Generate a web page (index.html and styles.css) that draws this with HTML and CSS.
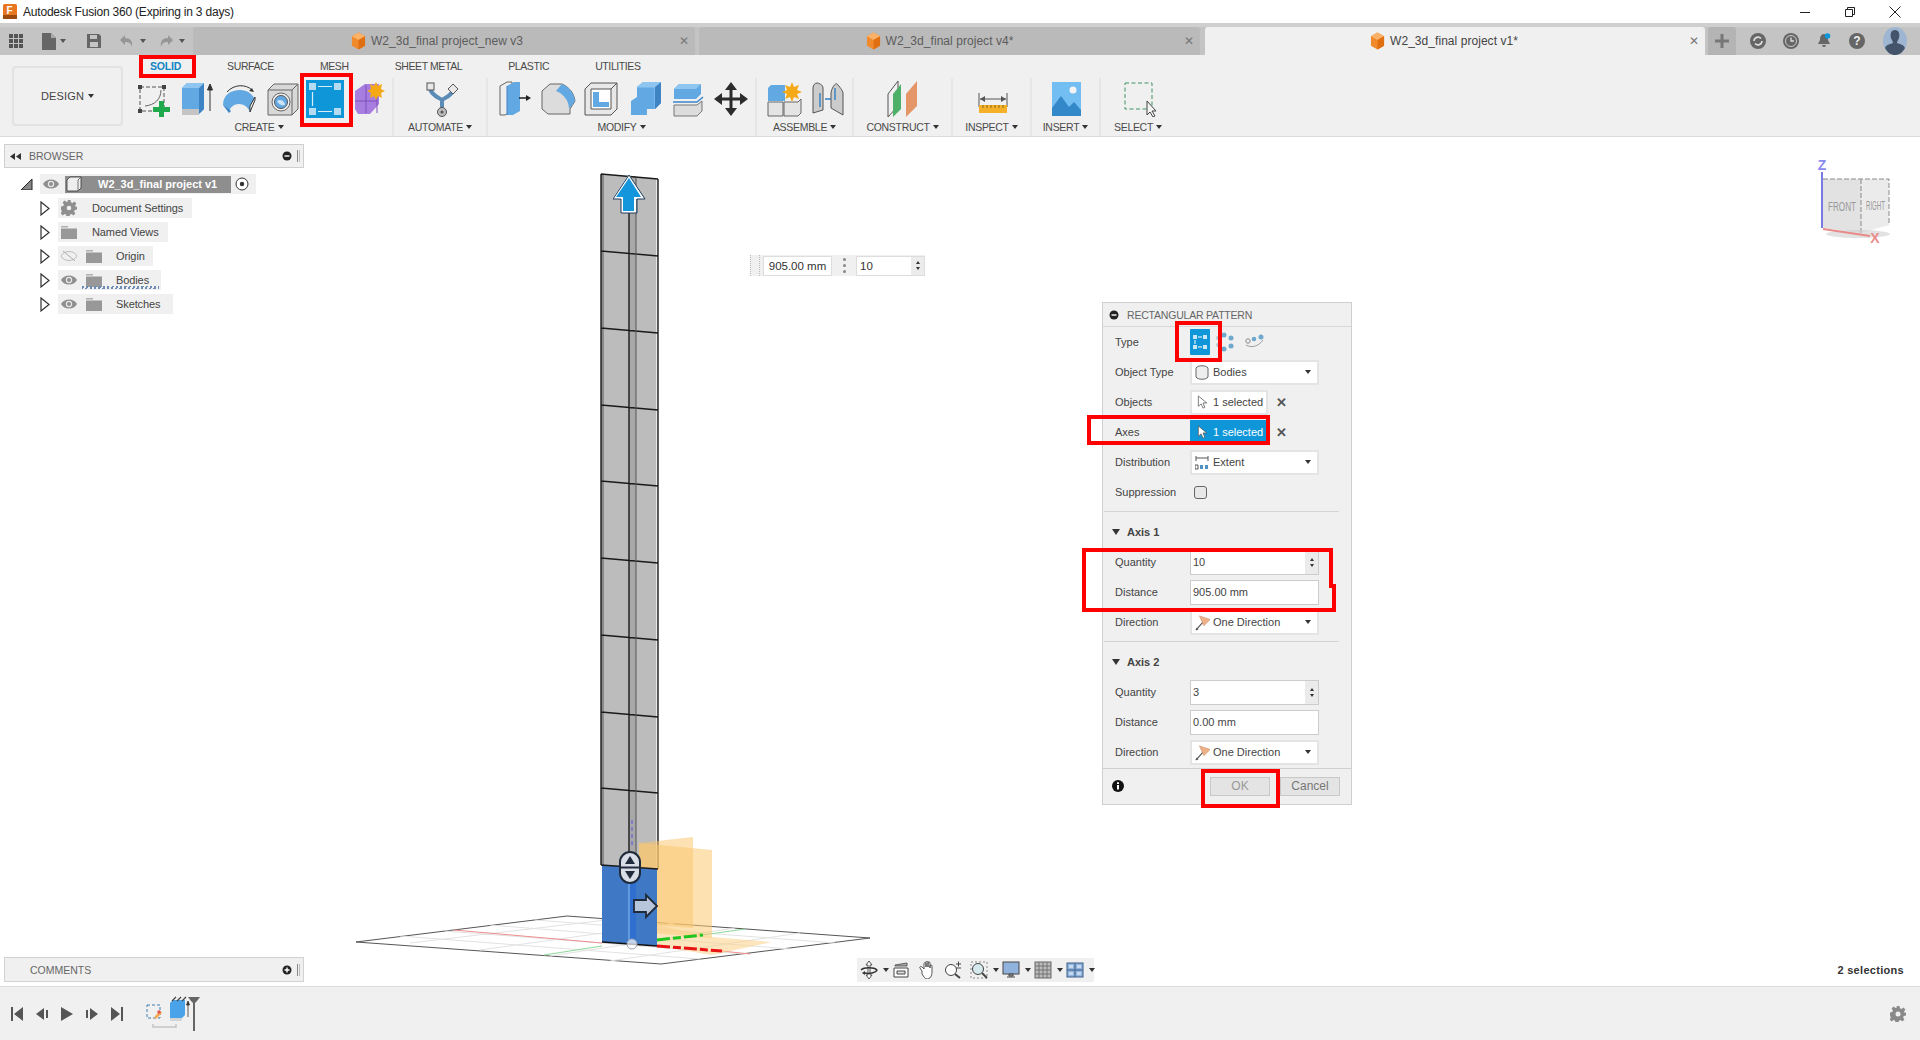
FILE: index.html
```html
<!DOCTYPE html>
<html lang="en">
<head>
<meta charset="utf-8">
<title>Autodesk Fusion 360</title>
<link rel="stylesheet" href="styles.css">
</head>
<body>
<svg class="defs" width="0" height="0">
  <defs>
    <symbol id="cube" viewBox="0 0 16 18"><path d="M8 0l7 4v10l-7 4-7-4V4z" fill="#f08a2c"/><path d="M8 0l7 4-7 4-7-4z" fill="#f9b267"/><path d="M8 8l7-4v10l-7 4z" fill="#e06f12"/></symbol>
    <symbol id="eye" viewBox="0 0 16 10"><path d="M0 5c3-6 13-6 16 0-3 6-13 6-16 0z" fill="#8f8f8f"/><circle cx="8" cy="5" r="3.2" fill="#e8e8e8"/><circle cx="8" cy="5" r="2" fill="#8f8f8f"/></symbol>
    <symbol id="folder" viewBox="0 0 16 13"><path d="M0 0h7v1.500H0z" fill="#b0b0b0"/><path d="M0 2.500h16V13H0z" fill="#989898"/></symbol>
    <symbol id="tree" viewBox="0 0 10 15"><path d="M1 1l8 6.500-8 6.500z" fill="#fff" stroke="#333" stroke-width="1.200"/></symbol>
    <symbol id="flag" viewBox="0 0 18 18"><path d="M1 17L9 8" stroke="#555" stroke-width="1.300"/><path d="M1 17l3-.5-2.500-2.500z" fill="#555"/><path d="M5 1l12 4-7 7z" fill="#eeb18a" stroke="#c8875c" stroke-width=".6"/></symbol>
    <symbol id="cursor" viewBox="0 0 12 16"><path d="M1 1v11l3-2.500 2 4.500 2-1-2-4.500h4z" fill="currentColor" stroke="#555" stroke-width=".8"/></symbol>
  </defs>
</svg>

<div class="app">
  <header class="titlebar">
    <svg class="app-logo" viewBox="0 0 14 15"><rect width="14" height="15" rx="1.500" fill="#e8761e"/><rect y="11" width="14" height="4" fill="#9d4a10"/><text x="3.500" y="10" class="logo-f">F</text></svg>
    <span class="app-title">Autodesk Fusion 360 (Expiring in 3 days)</span>
    <div class="winbtns">
      <svg class="win" viewBox="0 0 12 12"><path d="M1 6.500h10" stroke="#222" stroke-width="1"/></svg>
      <svg class="win" viewBox="0 0 12 12"><path d="M1.500 3.500h7v7h-7zM3.500 3.500v-2h7v7h-2" fill="none" stroke="#222"/></svg>
      <svg class="win" viewBox="0 0 12 12"><path d="M.5.500l11 11M11.500.500l-11 11" stroke="#222"/></svg>
    </div>
  </header>

  <div class="tabstrip">
    <div class="qat">
      <svg class="q-grid" viewBox="0 0 14 14"><path d="M0 0h4v4H0zM5 0h4v4H5zM10 0h4v4h-4zM0 5h4v4H0zM5 5h4v4H5zM10 5h4v4h-4zM0 10h4v4H0zM5 10h4v4H5zM10 10h4v4h-4z" fill="#555"/></svg>
      <svg class="q-file" viewBox="0 0 14 17"><path d="M0 0h9l5 5v12H0z" fill="#666"/><path d="M9 0v5h5z" fill="#aaa"/></svg>
      <i class="caret q-c1"></i>
      <svg class="q-save" viewBox="0 0 14 14"><path d="M0 0h12l2 2v12H0z" fill="#666"/><path d="M3 1h7v4H3zM3 8h8v5H3z" fill="#c4c4c4"/></svg>
      <svg class="q-undo" viewBox="0 0 14 14"><path d="M5 1L0 6l5 5V8c4 0 6 1 7 5 1-6-2-9-7-9z" fill="#969696"/></svg>
      <i class="caret q-c2"></i>
      <svg class="q-redo" viewBox="0 0 14 14"><path d="M9 1l5 5-5 5V8c-4 0-6 1-7 5-1-6 2-9 7-9z" fill="#969696"/></svg>
      <i class="caret q-c3"></i>
    </div>
    <div class="tab tab-a"><svg class="tab-ico"><use href="#cube"/></svg><span class="tab-name">W2_3d_final project_new v3</span><span class="tab-x">✕</span></div>
    <div class="tab tab-b"><svg class="tab-ico"><use href="#cube"/></svg><span class="tab-name">W2_3d_final project v4*</span><span class="tab-x">✕</span></div>
    <div class="tab tab-c tab-active"><svg class="tab-ico"><use href="#cube"/></svg><span class="tab-name">W2_3d_final project v1*</span><span class="tab-x">✕</span></div>
    <div class="tab-plus"><svg viewBox="0 0 14 14"><path d="M5.500 0h3v5.500H14v3H8.500V14h-3V8.500H0v-3h5.500z" fill="#777"/></svg></div>
    <div class="status">
      <svg class="st" viewBox="0 0 16 16"><circle cx="8" cy="8" r="8" fill="#666"/><path d="M4 8a4 4 0 0 1 7-2.500M12 8a4 4 0 0 1-7 2.500" fill="none" stroke="#ddd" stroke-width="1.600"/></svg>
      <svg class="st" viewBox="0 0 16 16"><circle cx="8" cy="8" r="8" fill="#666"/><circle cx="8" cy="8" r="5.500" fill="none" stroke="#ccc"/><path d="M8 4.500V8h3" fill="none" stroke="#ddd" stroke-width="1.300"/></svg>
      <svg class="st" viewBox="0 0 16 16"><path d="M8 1c3 0 4 3 4 6l2 4H2l2-4c0-3 1-6 4-6zM6 12h4a2 2 0 0 1-4 0z" fill="#666"/><circle cx="11.500" cy="3" r="2.800" fill="#0e96d8"/></svg>
      <svg class="st" viewBox="0 0 16 16"><circle cx="8" cy="8" r="8" fill="#666"/><text x="8" y="12" text-anchor="middle" class="help-q">?</text></svg>
      <svg class="avatar" viewBox="0 0 24 28"><ellipse cx="12" cy="14" rx="12" ry="14" fill="#9fb6d2"/><path d="M12 3c4 0 5 4 4 8-.5 2-2 3-2 5 3 1 7 2 8 5-3 5-6 7-10 7s-7-2-10-7c1-3 5-4 8-5 0-2-1.500-3-2-5-1-4 0-8 4-8z" fill="#44546a"/></svg>
    </div>
  </div>

  <section class="toolbar">
    <button class="design">DESIGN<i class="caret caret-dk"></i></button>
    <div class="ribbon">
      <nav class="rtabs">
        <span class="rtab rtab-on">SOLID</span><span class="rtab">SURFACE</span><span class="rtab">MESH</span><span class="rtab">SHEET METAL</span><span class="rtab">PLASTIC</span><span class="rtab">UTILITIES</span>
      </nav>
      <div class="panels">
        <div class="panel p-create">
          <div class="tools">
            <svg class="tool" viewBox="0 0 36 36"><path d="M5 6h24v24H5z" fill="none" stroke="#555" stroke-dasharray="4 2"/><path d="M3 4h4v4H3zM27 4h4v4h-4zM3 28h4v4H3z" fill="#444"/><path d="M10 25C20 24 26 18 26 9" fill="none" stroke="#666"/><path d="M24 20h5v6h6v5h-6v5h-5v-5h-6v-5h6z" fill="#1ea94c"/></svg>
            <svg class="tool" viewBox="0 0 36 36"><path d="M4 7l5-5h17v26l-5 5H4z" fill="#62a8e2"/><path d="M21 7l5-5v26l-5 5z" fill="#3e84c4"/><path d="M4 7l5-5h17l-5 5z" fill="#8ec6f0"/><path d="M4 28h17v6H4z" fill="#c4c4c4"/><path d="M32 30V6M29.500 9L32 3l2.500 6z" stroke="#333" stroke-width="1" fill="#333"/></svg>
            <svg class="tool" viewBox="0 0 36 36"><path d="M2 24C2 14 10 9 19 9c7 0 13 4 15 10l-5 12c-2-5-6-8-11-8-5 0-9 3-10 8z" fill="#62a8e2"/><path d="M29 31l5-12v-3l-5 9z" fill="#fff" stroke="#333"/><path d="M2 24l6 8 2-2c-1-1-4-3-8-6z" fill="#3e84c4"/><path d="M6 11C13 3 25 3 31 9" fill="none" stroke="#333"/><path d="M33 11l-5-1 3-3z" fill="#333"/></svg>
            <svg class="tool" viewBox="0 0 36 36"><path d="M3 9l6-6h24v25l-6 6H3z" fill="#d8d8d8" stroke="#666"/><path d="M3 9h24v25M27 9l6-6" fill="none" stroke="#666"/><circle cx="16" cy="21" r="9" fill="#f0f0f0" stroke="#666"/><circle cx="16" cy="21" r="6.500" fill="#62a8e2" stroke="#555"/><path d="M12 20a5 5 0 0 1 8 4c-3 1-6 0-8-4z" fill="#cde4f6"/></svg>
            <svg class="tool tool-pat" viewBox="0 0 38 38"><rect width="38" height="38" fill="#0e96d8"/><path d="M3 3h7v7H3zM28 3h7v7h-7zM3 28h7v7H3zM28 28h7v7h-7z" fill="#b5dbf3"/><path d="M12 6.500h14M12 31.500h14M6.500 12v14" stroke="#d9edf9" stroke-width="1.200"/></svg>
            <svg class="tool" viewBox="0 0 36 36"><path d="M5 10l10-7h14v20l-9 10H8l-3-5z" fill="#a77de0"/><path d="M5 20h22M16 4v28M27 10v22" stroke="#7d51bb"/><path d="M26 1l2 4 4-2-1 5 4 2-4 2 1 5-4-2-2 4-2-4-4 2 1-5-4-2 4-2-1-5 4 2z" fill="#f5a917"/></svg>
          </div>
          <div class="plabel">CREATE<i class="caret caret-dk"></i></div>
        </div>
        <div class="panel p-automate">
          <div class="tools">
            <svg class="tool" viewBox="0 0 36 36"><path d="M6 8c3 8 9 8 12 11M30 8c-3 8-9 8-12 11M18 19v9" fill="none" stroke="#5b8cb8" stroke-width="4"/><rect x="3" y="2" width="7" height="7" fill="#e8e8e8" stroke="#555"/><path d="M29 3l5 5-5 5-5-5z" fill="#e8e8e8" stroke="#555"/><circle cx="18" cy="31" r="4.500" fill="#bbb" stroke="#555"/><circle cx="18" cy="31" r="1.500" fill="#555"/></svg>
          </div>
          <div class="plabel">AUTOMATE<i class="caret caret-dk"></i></div>
        </div>
        <div class="panel p-modify">
          <div class="tools">
            <svg class="tool" viewBox="0 0 36 36"><path d="M3 5l7-4h5v29l-7 4H3z" fill="#eee" stroke="#666"/><path d="M10 5l7-4h6v29l-7 4h-6z" fill="#62a8e2"/><path d="M10 5v29" stroke="#3e84c4"/><path d="M22 17h8" stroke="#222" stroke-width="1.500"/><path d="M29 14l5 3-5 3z" fill="#222"/></svg>
            <svg class="tool" viewBox="0 0 36 36"><path d="M2 10l8-7h12c7 3 12 9 13 17l-5 8v5H8l-6-5z" fill="#dcdcdc" stroke="#666"/><path d="M22 3c7 3 12 9 13 17l-6 8c0-8-5-15-13-18z" fill="#62a8e2"/></svg>
            <svg class="tool" viewBox="0 0 36 36"><path d="M2 8l6-6h26v26l-6 6H2z" fill="#e8e8e8" stroke="#555"/><path d="M8 8h20v20H8z" fill="#fff" stroke="#555"/><path d="M10 11h6v10h10v5H10z" fill="#62a8e2"/><path d="M28 8l6-6" stroke="#555"/></svg>
            <svg class="tool" viewBox="0 0 36 36"><path d="M10 6l6-5h18v21l-6 6h-8v6H4V20l6-4z" fill="#62a8e2"/><path d="M10 6h18v22" fill="none" stroke="#8ec6f0"/><path d="M28 6l6-5v21l-6 6z" fill="#3e84c4"/><path d="M10 6l6-5h18l-6 5z" fill="#8ec6f0"/></svg>
            <svg class="tool" viewBox="0 0 36 36"><path d="M4 8l5-5h22v10l-5 5H4z" fill="#62a8e2"/><path d="M4 8l5-5h22l-5 5z" fill="#8ec6f0"/><path d="M3 21h24l6-5" fill="none" stroke="#3c85c9" stroke-width="1.500"/><path d="M4 24h23l5-4v10l-5 5H4z" fill="#dcdcdc" stroke="#777"/></svg>
            <svg class="tool" viewBox="0 0 36 36"><path d="M18 1l6 8h-4.500v7.500H27V12l8 6-8 6v-4.500h-7.500V27H24l-6 8-6-8h4.500v-7.500H9V24l-8-6 8-6v4.500h7.500V9H12z" fill="#2c2c2c"/></svg>
          </div>
          <div class="plabel">MODIFY<i class="caret caret-dk"></i></div>
        </div>
        <div class="panel p-assemble">
          <div class="tools">
            <svg class="tool" viewBox="0 0 36 36"><path d="M2 7l3-3h14v16H2z" fill="#62a8e2"/><path d="M2 21h15v14H2zM18 21h14l3-3v14l-3 3H18z" fill="#e4e4e4" stroke="#666"/><path d="M26 1l2 5 5-2-2 5 5 2-5 2 2 5-5-2-2 5-2-5-5 2 2-5-5-2 5-2-2-5 5 2z" fill="#f5a917"/></svg>
            <svg class="tool" viewBox="0 0 36 36"><path d="M3 32V7c0-3 2-5 4-5s6 2 6 5v22z" fill="#ccc" stroke="#555"/><path d="M33 34V12c0-2-4-7-6-9s-6 6-6 9v15z" fill="#ccc" stroke="#555"/><path d="M10 12v14M15 18h6M25 7v12" stroke="#2f7fc1" stroke-width="1.400"/></svg>
          </div>
          <div class="plabel">ASSEMBLE<i class="caret caret-dk"></i></div>
        </div>
        <div class="panel p-construct">
          <div class="tools">
            <svg class="tool" viewBox="0 0 36 36"><path d="M2 36V13L12 0v25z" fill="#f0f0f0" stroke="#555"/><path d="M7 36V13L15 3v25z" fill="#4db069"/><path d="M20 36V13L31 0v25z" fill="#e49669"/></svg>
          </div>
          <div class="plabel">CONSTRUCT<i class="caret caret-dk"></i></div>
        </div>
        <div class="panel p-inspect">
          <div class="tools">
            <svg class="tool" viewBox="0 0 36 36"><path d="M4 12v14M32 12v14M5 18h26" stroke="#555"/><path d="M5 18l5-3v6zM31 18l-5-3v6z" fill="#555"/><rect x="4" y="24" width="28" height="8" fill="#f5b02a"/><path d="M8 24v3M12 24v3M16 24v3M20 24v3M24 24v3M28 24v3" stroke="#8d6a13"/></svg>
          </div>
          <div class="plabel">INSPECT<i class="caret caret-dk"></i></div>
        </div>
        <div class="panel p-insert">
          <div class="tools">
            <svg class="tool" viewBox="0 0 36 36"><rect x="3" y="1" width="29" height="34" fill="#72bdf2"/><circle cx="24" cy="9" r="3.500" fill="#f4f4f4"/><path d="M3 27l9-12 8 11 5-5 7 8v6H3z" fill="#3288c8"/></svg>
          </div>
          <div class="plabel">INSERT<i class="caret caret-dk"></i></div>
        </div>
        <div class="panel p-select">
          <div class="tools">
            <svg class="tool" viewBox="0 0 36 36"><rect x="3" y="2" width="27" height="26" fill="none" stroke="#3b9460" stroke-dasharray="4 2.500"/><path d="M25 20v14l3-3 3 5 2-1-3-5h4z" fill="#f4f4f4" stroke="#444"/></svg>
          </div>
          <div class="plabel">SELECT<i class="caret caret-dk"></i></div>
        </div>
      </div>
    </div>
  </section>

  <main class="canvas">
    <svg class="scene" viewBox="0 137 1920 849">
      <!-- ground grid -->
      <path d="M356 942L567 916 870 938 661 964z" fill="#fff" stroke="#555" stroke-width="1"/>
      <path d="M400 936L700 959M445 931L745 954M490 925L790 949M535 920L835 943M410 943L615 919M480 950L675 923M550 956L735 928M610 961L800 933" stroke="#e2e2e2" stroke-width="1" fill="none"/>
      <path d="M454 930L602 943M722 951L750 954" stroke="#ef8d8d" stroke-width="1" fill="none"/>
      <path d="M544 955L602 946M703 935L745 929" stroke="#8ed99a" stroke-width="1" fill="none"/>
      <!-- tower -->
      <path d="M601 174L658 179V869L601 865z" fill="#bcbcbc"/>
      <path d="M601 174V865h3V174z" fill="#8a8a8a"/>
      <path d="M629 176h7V870h-7z" fill="#a8a8a8"/>
      <path d="M656 179h2V869h-2z" fill="#e6e6e6"/>
      <path class="tower-l" d="M601 174L658 179M601 251L658 256M601 328L658 333M601 405L658 410M601 481L658 486M601 558L658 563M601 635L658 640M601 712L658 717M601 788L658 793M601 174V865M658 179V869M629 176V865"/>
      <path d="M636 178V868" stroke="#555" stroke-width="1"/>
      <path d="M632 820V846" stroke="#6f6fd0" stroke-width="1.500" stroke-dasharray="4 3"/>
      <!-- construction planes -->
      <path d="M639 843L693 837V928L639 924z" fill="#fbc466" fill-opacity=".5"/>
      <path d="M639 843L712 850V938L639 932z" fill="#fcc871" fill-opacity=".55"/>
      <path d="M657 925L712 937 772 942 712 955 657 946z" fill="#fcd088" fill-opacity=".55"/>
      <!-- selected body -->
      <path d="M602 865L657 869V946L602 942z" fill="#3f78c4"/>
      <path d="M629 866h7V945h-7z" fill="#2f6fd0"/>
      <path d="M629 880V940" stroke="#8fc1f2" stroke-width="1"/>
      <path d="M601 865L658 869" stroke="#1a1a1a" stroke-width="1.400"/>
      <path d="M602 942L657 946" stroke="#111" stroke-width="1.500"/>
      <!-- axes at base -->
      <path d="M657 946L722 951" stroke="#e81414" stroke-width="3" stroke-dasharray="13 3 8 3"/>
      <path d="M657 940L703 935" stroke="#1fc41f" stroke-width="3" stroke-dasharray="13 3 8 3"/>
      <circle cx="632" cy="944" r="5" fill="#fff" fill-opacity=".7" stroke="#9aa5b5"/>
      <!-- gizmos -->
      <path d="M629 178L641 197H634V211H623V197H616z" fill="#1396dc" stroke="#fff" stroke-width="4" paint-order="stroke"/>
      <path d="M629 175L645 199H637V213H621V199H613z" fill="none" stroke="#1d3d5c" stroke-width="1"/>
      <rect x="620" y="852" width="20" height="31" rx="10" fill="#d8dde6" stroke="#1f2a3a" stroke-width="2"/>
      <path d="M620 867.500h20" stroke="#1f2a3a" stroke-width="2"/>
      <path d="M630 856l5 8h-10zM630 879l-5-8h10z" fill="#1f2a3a"/>
      <path d="M634 900H646V895L657 906 646 917V912H634z" fill="#b8c6db" stroke="#1f2a3a" stroke-width="1.800"/>
      <!-- view cube -->
      <path d="M1823 179H1861V233L1823 228z" fill="#e2e2e2"/>
      <path d="M1861 179H1889V225L1861 233z" fill="#ebebeb"/>
      <path d="M1823 179H1889V225M1861 179V233" fill="none" stroke="#8a8a8a" stroke-dasharray="5 2"/>
      <ellipse cx="1858" cy="234" rx="32" ry="4" fill="#cfcfcf" fill-opacity=".6"/>
      <path d="M1822 172V228" stroke="#7a7ae6" stroke-width="2"/>
      <path d="M1823 229L1870 236" stroke="#e88a8a" stroke-width="2"/>
      <text x="1822" y="170" class="vc-axis vc-z">Z</text>
      <text x="1875" y="243" class="vc-axis vc-x">X</text>
      <text x="1828" y="211" class="vc-face" textLength="28" lengthAdjust="spacingAndGlyphs">FRONT</text>
      <text x="1866" y="210" class="vc-face" textLength="19" lengthAdjust="spacingAndGlyphs">RIGHT</text>
    </svg>

    <aside class="browser">
      <div class="pbar">
        <svg class="rew" viewBox="0 0 11 7"><path d="M5 0v7L0 3.500zM11 0v7L6 3.500z" fill="#333"/></svg><span class="pbar-t">BROWSER</span>
        <svg class="pbar-i" viewBox="0 0 10 10"><circle cx="5" cy="5" r="4.500" fill="#222"/><path d="M2.500 5h5" stroke="#fff" stroke-width="1.400"/></svg><span class="pbar-s"></span>
      </div>
      <ul class="tree">
        <li class="tr tr-root">
          <svg class="tr-tri" viewBox="0 0 12 12"><path d="M0 12L11 1V12z" fill="#888" stroke="#222"/></svg>
          <span class="chip chip-root">
            <svg class="eye"><use href="#eye"/></svg>
            <span class="root-name">
              <svg class="root-ico" viewBox="0 0 16 16"><path d="M1 4l3-3h11v11l-3 3H1z" fill="#eee" stroke="#333" stroke-width=".8"/><path d="M12 4v11M12 4l3-3" stroke="#555" stroke-width=".8"/></svg>
              <b>W2_3d_final project v1</b>
            </span>
            <svg class="radio" viewBox="0 0 14 14"><circle cx="7" cy="7" r="6" fill="#fff" stroke="#333"/><circle cx="7" cy="7" r="2.200" fill="#333"/></svg>
          </span>
        </li>
        <li class="tr"><svg class="exp"><use href="#tree"/></svg><span class="chip chip-doc"><svg class="gear" viewBox="0 0 16 16"><path d="M6.500 0h3l.4 2.200 1.600.7 1.900-1.300 2 2-1.300 1.900.7 1.600L16 6.500v3l-2.200.4-.7 1.600 1.300 1.900-2 2-1.900-1.300-1.600.7-.4 2.200h-3l-.4-2.200-1.600-.7-1.900 1.300-2-2 1.300-1.900-.7-1.600L0 9.500v-3l2.200-.4.7-1.600L1.600 2.600l2-2 1.900 1.300 1.600-.7z" fill="#8f8f8f"/><circle cx="8" cy="8" r="2.300" fill="#f0f0f0"/></svg><span class="tl">Document Settings</span></span></li>
        <li class="tr"><svg class="exp"><use href="#tree"/></svg><span class="chip chip-named"><svg class="fold"><use href="#folder"/></svg><span class="tl">Named Views</span></span></li>
        <li class="tr"><svg class="exp"><use href="#tree"/></svg><span class="chip chip-origin"><svg class="eye" viewBox="0 0 16 10"><path d="M0 5c3-6 13-6 16 0-3 6-13 6-16 0z" fill="none" stroke="#bbb"/><path d="M2 0l12 10" stroke="#aaa"/></svg><svg class="fold"><use href="#folder"/></svg><span class="tl">Origin</span></span></li>
        <li class="tr"><svg class="exp"><use href="#tree"/></svg><span class="chip chip-bodies"><svg class="eye"><use href="#eye"/></svg><svg class="fold"><use href="#folder"/></svg><span class="tl">Bodies</span><i class="warn"></i></span></li>
        <li class="tr"><svg class="exp"><use href="#tree"/></svg><span class="chip chip-sketch"><svg class="eye"><use href="#eye"/></svg><svg class="fold"><use href="#folder"/></svg><span class="tl">Sketches</span></span></li>
      </ul>
    </aside>

    <div class="heads">
      <span class="heads-grip"></span>
      <span class="hbox hbox-a">905.00 mm</span>
      <span class="hdots"><i></i><i></i><i></i></span>
      <span class="hbox hbox-b">10<span class="spin"><i class="up"></i><i class="dn"></i></span></span>
    </div>

    <section class="dialog">
      <div class="dlg-head">
        <svg class="dlg-min" viewBox="0 0 10 10"><circle cx="5" cy="5" r="4.500" fill="#222"/><path d="M2.500 5h5" stroke="#fff" stroke-width="1.400"/></svg>
        RECTANGULAR PATTERN
      </div>
      <div class="dlg-row">
        <label>Type</label>
        <div class="types">
          <svg class="type type-on" viewBox="0 0 20 26"><rect width="20" height="26" rx="1" fill="#0e96d8"/><path d="M3 6h4v4H3zM13 6h4v4h-4zM3 16h4v4H3zM13 16h4v4h-4z" fill="#cbe6f7"/><path d="M8 8h4M8 18h4M5 11v4" stroke="#fff"/></svg>
          <svg class="type" viewBox="0 0 20 20"><g fill="#6ea8cd"><circle cx="9" cy="3" r="2.500"/><circle cx="16" cy="6" r="2.500"/><circle cx="16" cy="14" r="2.500"/><circle cx="9" cy="17" r="2.500"/></g><g fill="#b5c9d6"><circle cx="3" cy="6" r="2"/><circle cx="3" cy="13" r="2"/></g></svg>
          <svg class="type type-w" viewBox="0 0 20 20"><path d="M1 13c5 3 12 2 17-5" fill="none" stroke="#888" stroke-width=".8"/><g fill="#6ea8cd"><circle cx="9" cy="7" r="2.300"/><circle cx="16" cy="5" r="2.500"/></g><circle cx="3" cy="9" r="2.200" fill="none" stroke="#888"/></svg>
        </div>
      </div>
      <div class="dlg-row">
        <label>Object Type</label>
        <div class="ctl ctl-dd"><svg class="ctl-i" viewBox="0 0 14 15"><path d="M1 3c2-3 10-3 12 0v9c-2 3-10 3-12 0z" fill="#eee" stroke="#666"/></svg>Bodies<i class="caret caret-dk caret-end"></i></div>
      </div>
      <div class="dlg-row">
        <label>Objects</label>
        <div class="ctl ctl-sel"><svg class="ctl-i cur"><use href="#cursor"/></svg>1 selected</div>
        <span class="clear">✕</span>
      </div>
      <div class="dlg-row">
        <label>Axes</label>
        <div class="ctl ctl-sel ctl-on"><svg class="ctl-i cur"><use href="#cursor"/></svg>1 selected</div>
        <span class="clear">✕</span>
      </div>
      <div class="dlg-row">
        <label>Distribution</label>
        <div class="ctl ctl-dd"><svg class="ctl-i" viewBox="0 0 14 15"><path d="M1 1v5M13 1v5M1 3h12" stroke="#555" fill="none"/><path d="M0 10h3v4H0z" fill="none" stroke="#555"/><path d="M5 10h3v4H5zM10 10h3v4h-3z" fill="#4f93c4"/></svg>Extent<i class="caret caret-dk caret-end"></i></div>
      </div>
      <div class="dlg-row">
        <label>Suppression</label>
        <span class="check"></span>
      </div>
      <div class="dlg-sep"></div>

      <div class="dlg-row dlg-sec"><i class="caret caret-lg"></i>Axis 1</div>
      <div class="dlg-row">
        <label>Quantity</label>
        <div class="ctl ctl-num">10<span class="spin spin-ctl"><i class="up"></i><i class="dn"></i></span></div>
      </div>
      <div class="dlg-row">
        <label>Distance</label>
        <div class="ctl ctl-num">905.00 mm</div>
      </div>
      <div class="dlg-row">
        <label>Direction</label>
        <div class="ctl ctl-dd"><svg class="ctl-i ctl-flag"><use href="#flag"/></svg>One Direction<i class="caret caret-dk caret-end"></i></div>
      </div>
      <div class="dlg-sep"></div>

      <div class="dlg-row dlg-sec"><i class="caret caret-lg"></i>Axis 2</div>
      <div class="dlg-row">
        <label>Quantity</label>
        <div class="ctl ctl-num">3<span class="spin spin-ctl"><i class="up"></i><i class="dn"></i></span></div>
      </div>
      <div class="dlg-row">
        <label>Distance</label>
        <div class="ctl ctl-num">0.00 mm</div>
      </div>
      <div class="dlg-row">
        <label>Direction</label>
        <div class="ctl ctl-dd"><svg class="ctl-i ctl-flag"><use href="#flag"/></svg>One Direction<i class="caret caret-dk caret-end"></i></div>
      </div>

      <div class="dlg-foot">
        <svg class="info" viewBox="0 0 12 12"><circle cx="6" cy="6" r="6" fill="#111"/><path d="M5 5h2v4.500H5zM5 2.200h2v1.800H5z" fill="#fff"/></svg>
        <button class="btn btn-ok">OK</button>
        <button class="btn">Cancel</button>
      </div>
    </section>

    <div class="comments">
      <span class="pbar-t pbar-c">COMMENTS</span>
      <svg class="pbar-i" viewBox="0 0 10 10"><circle cx="5" cy="5" r="4.500" fill="#222"/><path d="M2.500 5h5M5 2.500v5" stroke="#fff" stroke-width="1.400"/></svg><span class="pbar-s"></span>
    </div>

    <div class="navbar">
      <svg class="nv" viewBox="0 0 18 18"><path d="M9 0l3 4h-2v10h2l-3 4-3-4h2V4H6z" fill="#fff" stroke="#444" stroke-width=".9"/><path d="M1 9c3-3 13-3 16 0-1 3-8 4-12 3" fill="none" stroke="#333" stroke-width="1.300"/><path d="M5 10l-3 2 3 2z" fill="#333"/></svg><i class="caret caret-dk nv-c"></i>
      <svg class="nv" viewBox="0 0 18 18"><path d="M2 7h14v9H2z" fill="#fff" stroke="#444"/><path d="M5 10h8v3H5z" fill="#ddd" stroke="#444"/><path d="M3 4l6-1 6-1v3H3z" fill="#aaa" stroke="#444" stroke-width=".8"/></svg>
      <svg class="nv" viewBox="0 0 18 18"><path d="M4 10L2 7c-1-1 1-2 2-1l2 2V3c0-2 2-2 2 0v3-5c0-1.500 2-1.500 2 0v5-4c0-1.500 2-1.500 2 0v5-2c0-1.500 2-1.500 2 0v6c0 4-2 7-5 7H9c-2 0-3-2-5-5z" fill="#fff" stroke="#444" stroke-width=".9"/></svg>
      <svg class="nv" viewBox="0 0 18 18"><circle cx="7" cy="9" r="5.500" fill="#fff" stroke="#444"/><path d="M11 13l5 4" stroke="#444" stroke-width="2"/><path d="M12 3h5M14.500.500v5M12 7h5" stroke="#444"/></svg>
      <svg class="nv" viewBox="0 0 18 18"><path d="M1 1h16v16H1z" fill="none" stroke="#888" stroke-dasharray="2 2"/><circle cx="8" cy="8" r="5.500" fill="#d5e9ec" stroke="#444"/><path d="M12 12l5 5" stroke="#444" stroke-width="2"/></svg><i class="caret caret-dk nv-c"></i>
      <svg class="nv" viewBox="0 0 18 18"><rect x="1" y="1" width="16" height="12" fill="#8fb3dd" stroke="#444"/><path d="M7 13h4v2H7zM5 16h8" fill="#aaa" stroke="#444"/></svg><i class="caret caret-dk nv-c"></i>
      <svg class="nv" viewBox="0 0 18 18"><rect x="1" y="1" width="16" height="16" fill="#bbb" stroke="#666"/><path d="M5 1v16M9 1v16M13 1v16M1 5h16M1 9h16M1 13h16" stroke="#666" stroke-width=".8"/></svg><i class="caret caret-dk nv-c"></i>
      <svg class="nv" viewBox="0 0 18 18"><rect x="1" y="2" width="16" height="14" fill="#8fb3dd" stroke="#3d5f88"/><path d="M9 2v14M1 9h16" stroke="#3d5f88"/><path d="M3 4h4v3H3zM11 4h4v3h-4zM3 11h4v3H3zM11 11h4v3h-4z" fill="#c7d9ef"/></svg><i class="caret caret-dk nv-c"></i>
    </div>

    <div class="selcount">2 selections</div>
  </main>

  <footer class="timeline">
    <div class="tl-btns">
      <svg class="tb" viewBox="0 0 12 14"><path d="M0 0h2v14H0zM12 0v14L3 7z" fill="#555"/></svg>
      <svg class="tb" viewBox="0 0 12 14"><path d="M0 7l8-6v12zM10 3h2v8h-2z" fill="#555"/></svg>
      <svg class="tb" viewBox="0 0 12 14"><path d="M0 0l12 7-12 7z" fill="#555"/></svg>
      <svg class="tb" viewBox="0 0 12 14"><path d="M12 7L4 1v12zM0 3h2v8H0z" fill="#555"/></svg>
      <svg class="tb" viewBox="0 0 12 14"><path d="M0 0l9 7-9 7zM10 0h2v14h-2z" fill="#555"/></svg>
    </div>
    <div class="tl-feats">
      <svg class="feat" viewBox="0 0 60 34">
        <path d="M3 8h13v13H3z" fill="none" stroke="#3a7fb5" stroke-dasharray="3 2"/>
        <path d="M11 19l5-5 2 2-5 5-3 1z" fill="#f2a94f"/><circle cx="15" cy="15" r="1.800" fill="#e2574c"/>
        <path d="M26 6l3-3h12v15l-3 3H26z" fill="#4aa3e8"/><path d="M26 21h12v3H26z" fill="#d5d5d5"/><path d="M44 20V6M42.500 8L44 4l1.500 4z" stroke="#333" fill="#333" stroke-width=".8"/>
        <path d="M9 27v3h23v-3" fill="none" stroke="#c4c4c4" stroke-width="1.500"/>
        <path d="M28 1l4-4M33 1l4-4M38 1l4-4" transform="translate(0 3)" stroke="#444" stroke-width="1.200"/>
        <path d="M44 0h12l-3 4-2 2v0h-2v0l-2-2z" fill="#666"/><path d="M49 5h2v29h-2z" fill="#666"/>
      </svg>
    </div>
    <svg class="tl-gear" viewBox="0 0 16 16"><path d="M6.500 0h3l.4 2.200 1.600.7 1.900-1.300 2 2-1.300 1.900.7 1.600L16 6.500v3l-2.200.4-.7 1.600 1.300 1.900-2 2-1.900-1.300-1.600.7-.4 2.200h-3l-.4-2.200-1.600-.7-1.900 1.300-2-2 1.300-1.900-.7-1.600L0 9.500v-3l2.200-.4.7-1.600L1.600 2.600l2-2 1.900 1.300 1.600-.7z" fill="#8a8a8a"/><circle cx="8" cy="8" r="2.500" fill="#f0f0f0"/></svg>
  </footer>

  <svg class="marks" viewBox="0 0 1920 1040">
    <g class="mark">
      <rect x="141" y="57" width="53" height="19"/>
      <rect x="302" y="75" width="49" height="50"/>
      <rect x="1177" y="323" width="43" height="37"/>
      <rect x="1089" y="417" width="179" height="26"/>
      <path d="M1084 550H1331V586H1334V610H1084Z"/>
      <rect x="1203" y="771" width="75" height="35"/>
    </g>
  </svg>
</div>
</body>
</html>
```

FILE: styles.css
```css
* { box-sizing: border-box; }
html, body { margin: 0; height: 100%; overflow: hidden; }
body { font-family: "Liberation Sans", Arial, sans-serif; font-size: 11px; color: #444; background: #fff; }
.defs { position: absolute; }
ul { list-style: none; margin: 0; padding: 0; }
i { display: block; font-style: normal; }
svg { flex: none; }

.app { position: relative; display: flex; flex-direction: column; height: 1040px; width: 1920px; overflow: hidden; }

/* title bar */
.titlebar { flex: 0 0 23px; display: flex; align-items: center; padding-left: 3px; background: #fff; }
.app-logo { width: 14px; height: 15px; }
.logo-f { font: bold 10px "Liberation Sans", sans-serif; fill: #fff; }
.app-title { margin-left: 6px; font-size: 12px; letter-spacing: -.2px; color: #222; }
.winbtns { margin-left: auto; display: flex; align-items: center; gap: 33px; padding-right: 19px; }
.win { width: 12px; height: 12px; }

/* tab strip */
.tabstrip { flex: 0 0 32px; display: flex; gap: 4px; padding-top: 4px; background: linear-gradient(#cfcfcf 4px, #c4c4c4 4px); }
.qat { flex: 0 0 189px; display: flex; align-items: center; padding-left: 9px; }
.q-grid { width: 14px; height: 14px; }
.q-file { width: 14px; height: 17px; margin-left: 19px; }
.q-c1 { margin-left: 4px; }
.q-save { width: 14px; height: 14px; margin-left: 21px; }
.q-undo { width: 14px; height: 14px; margin-left: 19px; }
.q-c2 { margin-left: 6px; border-top-color: #999; }
.q-redo { width: 14px; height: 14px; margin-left: 13px; }
.q-c3 { margin-left: 6px; border-top-color: #999; }

.tab { position: relative; display: flex; align-items: center; justify-content: center; background: #bababa; color: #5c5c5c; font-size: 12px; letter-spacing: .05px; border-radius: 3px 3px 0 0; }
.tab-a { flex: 0 0 502px; padding-right: 14px; }
.tab-b { flex: 0 0 501px; padding-right: 20px; }
.tab-c { flex: 0 0 500px; margin-left: 1px; padding-right: 22px; }
.tab-active { background: #f0f0f0; color: #444; }
.tab-ico { width: 15px; height: 18px; margin-right: 5px; }
.tab-name { white-space: nowrap; }
.tab-x { position: absolute; right: 6px; top: 7px; font-size: 12px; color: #777; }
.tab-plus { flex: 0 0 28px; display: flex; align-items: center; justify-content: center; background: #b4b4b4; margin-left: -1px; border-radius: 3px 3px 0 0; }
.tab-plus svg { width: 14px; height: 14px; }
.status { flex: 1; display: flex; align-items: center; gap: 17px; padding-left: 10px; }
.st { width: 16px; height: 16px; }
.help-q { font: bold 12px "Liberation Sans", sans-serif; fill: #eee; }
.avatar { width: 24px; height: 28px; margin-left: 1px; }

.caret { flex: none; width: 0; height: 0; border-left: 3px solid transparent; border-right: 3px solid transparent; border-top: 4px solid #555; }
.caret-dk { border-top-color: #333; }
.caret-lg { border-left-width: 4.500px; border-right-width: 4.500px; border-top-width: 6px; border-top-color: #333; }

/* toolbar */
.toolbar { flex: 0 0 82px; display: flex; background: #f0f0f0; border-bottom: 1px solid #dcdcdc; box-shadow: 0 1px 2px rgba(0,0,0,.05); }
.design { flex: 0 0 111px; height: 60px; margin: 11px 3px 0 12px; display: flex; align-items: center; justify-content: center; gap: 4px; background: #f0f0f0; border: 2px solid #e2e2e2; border-radius: 4px; font: 11px "Liberation Sans", sans-serif; letter-spacing: .15px; color: #444; }
.ribbon { display: flex; flex-direction: column; }
.rtabs { height: 22px; display: flex; align-items: center; gap: 46px; padding-left: 24px; font-size: 10.500px; letter-spacing: -.4px; color: #4a4a4a; }
.rtab-on { color: #1186c4; font-weight: bold; letter-spacing: -.2px; }
.rtab { white-space: nowrap; }
.panels { display: flex; height: 59px; padding-top: 1px; }
.panel { display: flex; flex-direction: column; align-items: center; border-right: 2px solid #e6e6e6; }
.tools { height: 42px; display: flex; align-items: center; justify-content: center; padding-left: 3px; }
.tool { width: 36px; height: 36px; margin: 0 3.600px; }
.tool-pat { width: 38px; height: 38px; margin: 0 2.600px 0 1.600px; }
.plabel { display: flex; align-items: center; gap: 3px; height: 14px; font-size: 10.500px; letter-spacing: -.3px; color: #4a4a4a; white-space: nowrap; }
.p-create { width: 268px; }
.p-automate { width: 94px; }
.p-modify { width: 269px; }
.p-assemble { width: 97px; }
.p-construct { width: 99px; }
.p-inspect { width: 79px; }
.p-insert { width: 69px; }
.p-select { width: 74px; border-right: 0; }

/* canvas */
.canvas { position: relative; flex: 1; background: #fff; }
.scene { position: absolute; left: 0; top: 0; width: 1920px; height: 849px; }
.tower-l { stroke: #1a1a1a; stroke-width: 1.400; fill: none; }
.vc-axis { font: bold 14px "Liberation Sans", sans-serif; text-anchor: middle; }
.vc-z { fill: #8a8af0; }
.vc-x { fill: #ec8c8c; }
.vc-face { font: 12px "Liberation Sans", sans-serif; fill: #999; }

/* browser */
.browser { position: absolute; left: 4px; top: 7px; width: 300px; }
.pbar { display: flex; align-items: center; height: 24px; background: #f0f0f0; border: 1px solid #cfcfcf; padding: 0 3px 0 0; }
.rew { width: 11px; height: 7px; margin: 0 8px 0 5px; }
.pbar-t { color: #666; font-size: 10.500px; }
.pbar-i { width: 10px; height: 10px; margin-left: auto; }
.pbar-s { width: 3px; height: 12px; margin-left: 5px; border-left: 1px solid #888; border-right: 1px solid #bbb; }
.tree { padding-top: 4px; }
.tr { position: relative; height: 24px; display: flex; align-items: center; padding-left: 36px; }
.tr-root { padding-left: 17px; }
.tr-tri { width: 12px; height: 12px; margin-right: 7px; }
.exp { width: 10px; height: 15px; margin-right: 8px; }
.chip { position: relative; display: flex; align-items: center; height: 20px; background: #f0f0f0; padding-left: 3px; color: #444; }
.chip-root { width: 216px; }
.chip-doc { width: 134px; }
.chip-named { width: 110px; }
.chip-origin { width: 95px; }
.chip-bodies { width: 103px; }
.chip-sketch { width: 115px; }
.eye { width: 16px; height: 10px; }
.fold { width: 16px; height: 13px; }
.chip-origin .fold, .chip-bodies .fold, .chip-sketch .fold { margin-left: 9px; }
.gear { width: 16px; height: 16px; }
.tl { margin-left: 15px; letter-spacing: -.1px; white-space: nowrap; }
.chip-origin .tl, .chip-bodies .tl, .chip-sketch .tl { margin-left: 14px; }
.root-name { display: flex; align-items: center; width: 166px; height: 17px; margin-left: 6px; background: #8e8e8e; color: #fff; }
.root-ico { width: 16px; height: 16px; margin-left: 1px; }
.root-name b { margin-left: 16px; font-size: 11px; white-space: nowrap; }
.radio { width: 14px; height: 14px; margin-left: 4px; }
.warn { position: absolute; left: 24px; right: 2px; bottom: 1px; height: 3px; background: repeating-linear-gradient(110deg, #6f8cb4 0 2px, transparent 2px 4px); }

/* heads-up input */
.heads { position: absolute; left: 750px; top: 118px; height: 21px; display: flex; align-items: center; background: #f0f0f0; }
.heads-grip { width: 10px; height: 21px; border-left: 1px dotted #bbb; border-right: 1px dotted #bbb; margin-right: 3px; }
.hbox { position: relative; display: flex; align-items: center; height: 20px; background: #fff; border: 1px solid #ddd; font-size: 11.500px; color: #333; }
.hbox-a { width: 69px; justify-content: center; }
.hbox-b { width: 69px; padding-left: 3px; }
.hdots { width: 24px; display: flex; flex-direction: column; align-items: center; gap: 3px; }
.hdots i { width: 3px; height: 3px; border-radius: 50%; background: #888; }
.spin { position: absolute; right: 0; top: 0; bottom: 0; width: 13px; display: flex; flex-direction: column; align-items: center; justify-content: center; gap: 3px; background: #ececec; }
.up { width: 0; height: 0; border-left: 2.500px solid transparent; border-right: 2.500px solid transparent; border-bottom: 3px solid #333; }
.dn { width: 0; height: 0; border-left: 2.500px solid transparent; border-right: 2.500px solid transparent; border-top: 3px solid #333; }

/* dialog */
.dialog { position: absolute; left: 1102px; top: 165px; width: 250px; height: 503px; background: #f0f0f0; border: 1px solid #cfcfcf; font-size: 11px; color: #444; }
.dlg-head { height: 24px; display: flex; align-items: center; padding-left: 6px; gap: 8px; border-bottom: 1px solid #d8d8d8; color: #666; font-size: 10.500px; letter-spacing: -.2px; }
.dlg-min { width: 10px; height: 10px; }
.dlg-row { height: 30px; display: flex; align-items: center; padding-left: 12px; }
.dlg-row label { flex: 0 0 75px; }
.types { display: flex; align-items: center; gap: 5px; }
.type { width: 20px; height: 26px; }
.type-w { margin-left: 5px; }
.ctl { position: relative; display: flex; align-items: center; height: 25px; background: #fff; border: 2px solid #e4e4e4; font-size: 11px; color: #444; }
.ctl-dd { width: 129px; padding-left: 21px; }
.ctl-sel { width: 78px; padding-left: 21px; white-space: nowrap; }
.ctl-on { background: #0e96d8; border-color: #0e96d8; color: #fff; }
.ctl-num { width: 129px; padding-left: 2px; border-width: 1px; border-color: #ccc; }
.ctl-i { position: absolute; left: 3px; top: 3px; width: 14px; height: 15px; }
.ctl-flag { width: 16px; height: 16px; }
.cur { color: #fff; width: 12px; height: 15px; left: 5px; }
.caret-end { position: absolute; right: 6px; top: 8px; }
.clear { margin-left: 8px; font-weight: bold; font-size: 13px; color: #555; }
.check { width: 13px; height: 13px; margin-left: 4px; background: #e8e8e8; border: 1px solid #666; border-radius: 3px; }
.spin-ctl { background: #ebebeb; }
.dlg-sep { height: 10px; margin-left: 1px; width: 235px; background: linear-gradient(transparent 4px, #d4d4d4 4px, #d4d4d4 5px, transparent 5px); }
.dlg-sec { gap: 7px; padding-left: 9px; font-weight: bold; color: #444; }
.dlg-foot { height: 35px; margin-top: 1px; display: flex; align-items: center; border-top: 1px solid #d0d0d0; padding-left: 9px; }
.info { width: 12px; height: 12px; margin-right: 86px; }
.btn { width: 60px; height: 19px; margin-right: 10px; padding: 0; background: #e4e4e4; border: 1px solid #c8c8c8; font: 12px "Liberation Sans", sans-serif; color: #777; }
.btn-ok { color: #999; }

/* comments, nav */
.comments { position: absolute; left: 4px; top: 820px; width: 300px; height: 25px; display: flex; align-items: center; background: #f0f0f0; border: 1px solid #d2d2d2; padding: 0 3px 0 25px; }
.navbar { position: absolute; left: 857px; top: 821px; width: 237px; height: 24px; display: flex; align-items: center; padding-left: 3px; background: #f0f0f0; }
.nv { width: 18px; height: 18px; margin-right: 8px; }
.nv-c { margin: 0 3px 0 -3px; }
.selcount { position: absolute; right: 16px; top: 827px; font-weight: bold; font-size: 11px; letter-spacing: .3px; color: #333; }

/* timeline */
.timeline { flex: 0 0 54px; display: flex; align-items: center; background: #f0f0f0; border-top: 1px solid #dcdcdc; padding-left: 11px; }
.tl-btns { display: flex; gap: 13px; }
.tb { width: 12px; height: 14px; }
.tl-feats { margin-left: 21px; }
.feat { display: block; width: 60px; height: 34px; overflow: visible; }
.tl-gear { width: 16px; height: 16px; margin-left: auto; margin-right: 14px; }

/* red annotation boxes */
.marks { position: absolute; left: 0; top: 0; width: 1920px; height: 1040px; pointer-events: none; }
.mark { fill: none; stroke: #f00; stroke-width: 4; }
```
